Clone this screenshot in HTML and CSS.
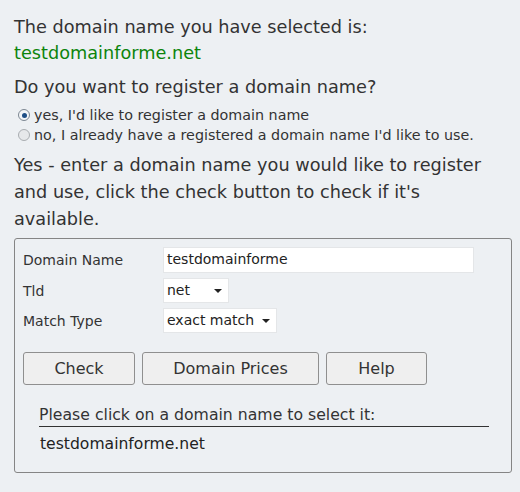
FILE: index.html
```html
<!DOCTYPE html>
<html>
<head>
<meta charset="utf-8">
<link rel="stylesheet" href="styles.css">
</head>
<body>
<div class="page">
  <div class="selected">
    <div class="big">The domain name you have selected is:</div>
    <div class="big green">testdomainforme.net</div>
  </div>
  <div class="question">
    <div class="big">Do you want to register a domain name?</div>
    <label class="opt"><span class="radio on"></span>yes, I'd like to register a domain name</label>
    <label class="opt"><span class="radio"></span>no, I already have a registered a domain name I'd like to use.</label>
  </div>
  <div class="big intro">Yes - enter a domain name you would like to register and use, click the check button to check if it's available.</div>
  <div class="box">
    <div class="form">
      <div class="lbl">Domain Name</div>
      <div class="field wide">testdomainforme</div>
      <div class="lbl">Tld</div>
      <div class="field sel s1">net<span class="caret"></span></div>
      <div class="lbl">Match Type</div>
      <div class="field sel s2">exact match<span class="caret"></span></div>
    </div>
    <div class="buttons">
      <div class="btn b1">Check</div>
      <div class="btn b2">Domain Prices</div>
      <div class="btn b3">Help</div>
    </div>
    <div class="results">
      <div class="rhead">Please click on a domain name to select it:</div>
      <div class="ritem">testdomainforme.net</div>
    </div>
  </div>
</div>
</body>
</html>
```
FILE: styles.css
```css
html, body {
  margin: 0;
  padding: 0;
  background: #edf0f3;
}
body {
  font-family: "DejaVu Sans", sans-serif;
  color: #333;
}
.page {
  padding: 14px 8px 0 14px;
}
.big {
  font-size: 17.7px;
  line-height: 26px;
}
.green {
  color: #0c840c;
}
.selected {
  margin-bottom: 8px;
}
.question .big {
  margin-bottom: 5px;
}
.opt {
  display: flex;
  align-items: center;
  font-size: 14.3px;
  line-height: 20px;
  padding-left: 4px;
}
.radio {
  width: 10px;
  height: 10px;
  border: 1px solid #a9adb1;
  border-radius: 50%;
  background: #e6e8ea;
  margin-right: 4px;
  box-sizing: content-box;
  position: relative;
}
.radio.on {
  border-color: #7d8792;
  background: #f4f6f8;
}
.radio.on::after {
  content: "";
  position: absolute;
  left: 2.5px;
  top: 2.5px;
  width: 5px;
  height: 5px;
  border-radius: 50%;
  background: #1f4f86;
}
.intro {
  margin-top: 7px;
  width: 480px;
  line-height: 27px;
}
.box {
  margin-top: 5px;
  width: 498px;
  height: 235px;
  border: 1px solid #858585;
  border-radius: 3px;
  box-sizing: border-box;
  padding: 8px 8px 0 8px;
}
.form {
  display: grid;
  grid-template-columns: 140px auto;
  row-gap: 5px;
  align-items: center;
  justify-items: start;
}
.lbl {
  font-size: 14px;
}
.field {
  background: #fff;
  border: 1px solid #e4e6e8;
  font-size: 14px;
  height: 25px;
  line-height: 23px;
  box-sizing: border-box;
  padding: 0 3px;
  color: #222;
  white-space: nowrap;
}
.wide {
  width: 311px;
  height: 26px;
}
.sel {
  display: flex;
  align-items: center;
  justify-content: space-between;
}
.s1 { width: 66px; }
.s2 { width: 114px; }
.caret {
  width: 0;
  height: 0;
  border-left: 4px solid transparent;
  border-right: 4px solid transparent;
  border-top: 4px solid #222;
  margin-right: 3px;
}
.buttons {
  display: flex;
  gap: 7px;
  margin-top: 19px;
}
.btn {
  height: 33px;
  box-sizing: border-box;
  border: 1px solid #8f8f8f;
  border-radius: 3px;
  background: #efefef;
  font-size: 16px;
  display: flex;
  align-items: center;
  justify-content: center;
}
.b1 { width: 112px; }
.b2 { width: 177px; }
.b3 { width: 101px; }
.results {
  margin: 20px 0 0 16px;
  width: 450px;
}
.rhead {
  font-size: 15.7px;
  line-height: 20px;
  border-bottom: 1px solid #333;
  padding-bottom: 1px;
}
.ritem {
  font-size: 15.6px;
  line-height: 22px;
  padding-top: 6px;
  padding-left: 1px;
  color: #222;
}
```
